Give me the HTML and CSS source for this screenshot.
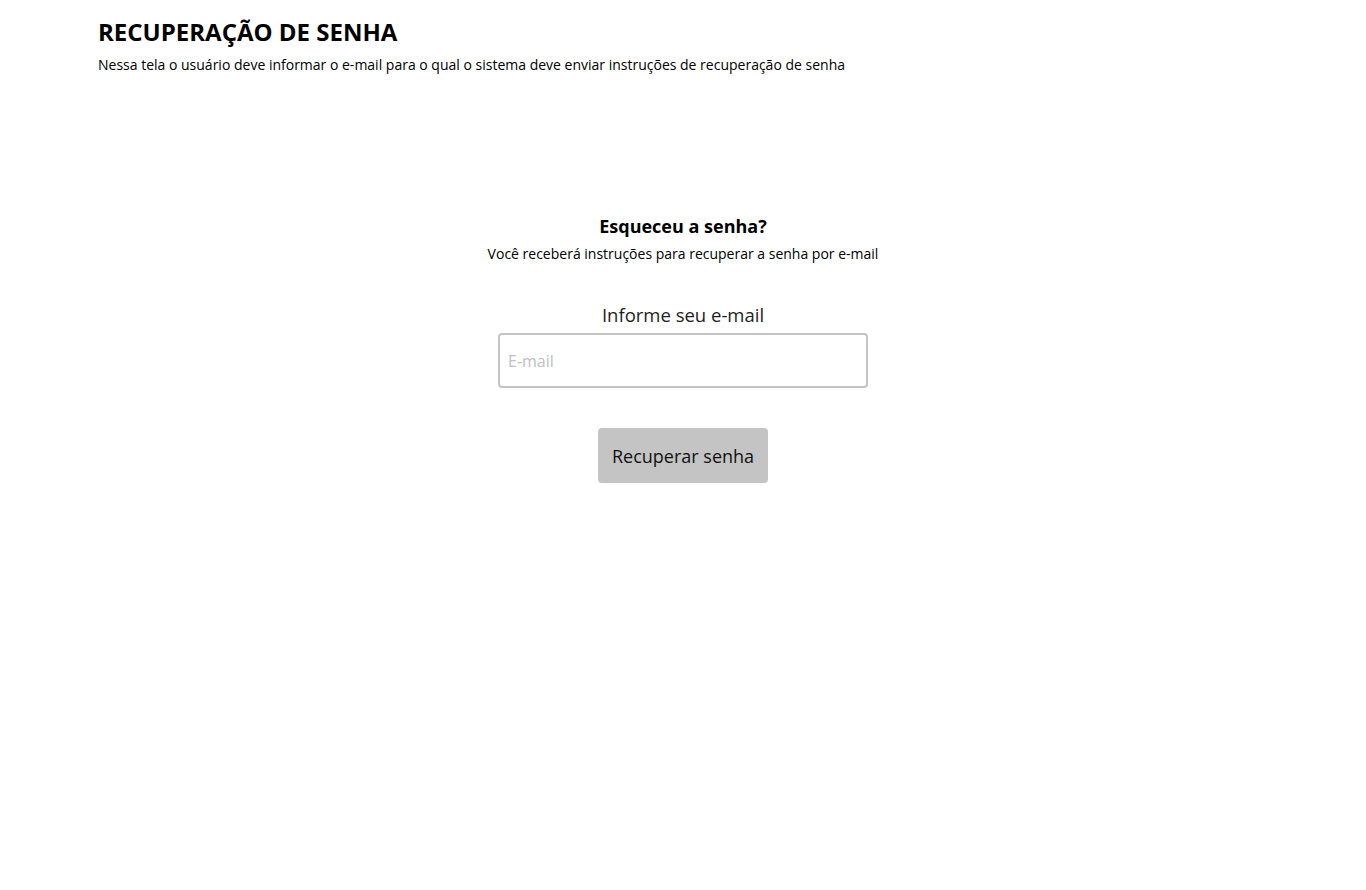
FILE: index.html
```html
<!DOCTYPE html>
<html lang="pt-BR">
<head>
<meta charset="utf-8">
<title>Recuperação de senha</title>
<link rel="stylesheet" href="styles.css">
</head>
<body>
<header class="page-header">
  <h1 class="page-title">RECUPERAÇÃO DE SENHA</h1>
  <p class="page-desc">Nessa tela o usuário deve informar o e-mail para o qual o sistema deve enviar instruções de recuperação de senha</p>
</header>
<main class="recover">
  <h2 class="recover-title">Esqueceu a senha?</h2>
  <p class="recover-text">Você receberá instruções para recuperar a senha por e-mail</p>
  <form class="recover-form">
    <label class="field-label" for="email">Informe seu e-mail</label>
    <input class="field-input" id="email" type="email" placeholder="E-mail">
    <button class="btn" type="button">Recuperar senha</button>
  </form>
</main>
</body>
</html>
```
FILE: styles.css
```css
* { box-sizing: border-box; }
html, body { margin: 0; padding: 0; background: #fff; }
body {
  font-family: "Open Sans", "Noto Sans", sans-serif;
  color: #000;
}
.page-header {
  padding: 15px 98px 0;
}
.page-title {
  margin: 0;
  font-size: 24px;
  font-weight: 700;
  line-height: 34px;
}
.page-desc {
  margin: 6px 0 0;
  font-size: 14px;
  line-height: 20px;
}
.recover {
  display: flex;
  flex-direction: column;
  align-items: center;
  padding-top: 138px;
}
.recover-title {
  margin: 0;
  font-size: 18px;
  font-weight: 700;
  line-height: 26px;
}
.recover-text {
  margin: 5px 0 0;
  font-size: 14px;
  line-height: 20px;
}
.recover-form {
  display: flex;
  flex-direction: column;
  align-items: center;
  margin-top: 38px;
}
.field-label {
  font-size: 18.5px;
  line-height: 26px;
  color: #1e1e1e;
}
.field-input {
  margin-top: 5px;
  width: 370px;
  height: 55px;
  border: 2px solid #c4c4c4;
  border-radius: 4px;
  padding: 0 8px;
  font-family: inherit;
  font-size: 16px;
  color: #222;
  outline: none;
}
.field-input::placeholder { color: #c0c0c0; }
.btn {
  margin-top: 40px;
  width: 170px;
  height: 55px;
  border: none;
  border-radius: 4px;
  background: #c4c4c4;
  font-family: inherit;
  font-size: 18px;
  color: #111;
  cursor: pointer;
}
```
